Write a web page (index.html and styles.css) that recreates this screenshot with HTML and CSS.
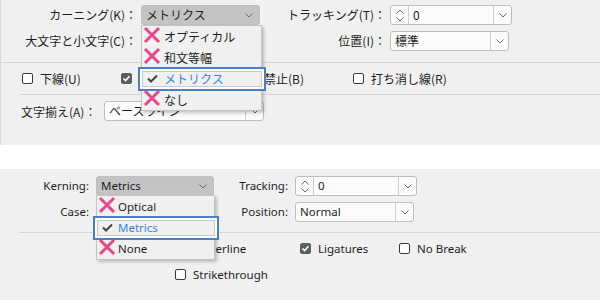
FILE: index.html
```html
<!DOCTYPE html>
<html lang="ja">
<head>
  <meta charset="UTF-8">
  <title>カーニング</title>
  <link rel="stylesheet" href="styles.css">
</head>
<body>

  <div class="panel ja">
    <div class="form form-ja">
      <label class="lbl">カーニング(K)：</label>
      <div class="field open w119">
        <span class="val">メトリクス</span>
        <span class="btn"><svg class="chev" viewBox="0 0 8 5"><polyline points="0.5,0.5 4,4 7.5,0.5"/></svg></span>
      </div>
      <label class="lbl">トラッキング(T)：</label>
      <div class="field spin w122">
        <span class="arrows">
          <svg class="chev" viewBox="0 0 8 5"><polyline points="0.5,4.5 4,1 7.5,4.5"/></svg>
          <svg class="chev" viewBox="0 0 8 5"><polyline points="0.5,0.5 4,4 7.5,0.5"/></svg>
        </span>
        <span class="val">0</span>
        <span class="btn"><svg class="chev" viewBox="0 0 8 5"><polyline points="0.5,0.5 4,4 7.5,0.5"/></svg></span>
      </div>

      <label class="lbl">大文字と小文字(C)：</label>
      <div class="field w119">
        <span class="val">標準</span>
        <span class="btn"><svg class="chev" viewBox="0 0 8 5"><polyline points="0.5,0.5 4,4 7.5,0.5"/></svg></span>
      </div>
      <label class="lbl">位置(I)：</label>
      <div class="field w119">
        <span class="val">標準</span>
        <span class="btn"><svg class="chev" viewBox="0 0 8 5"><polyline points="0.5,0.5 4,4 7.5,0.5"/></svg></span>
      </div>
    </div>

    <div class="rule"></div>

    <div class="checks checks-ja">
      <div class="check c99"><span class="box"></span>下線(U)</div>
      <div class="check c101"><span class="box on"><svg viewBox="0 0 11 11"><polyline points="2.5,5.5 4.6,7.6 8.5,3.2"/></svg></span>合字(L)</div>
      <div class="check c131"><span class="box"></span>分離禁止(B)</div>
      <div class="check"><span class="box"></span>打ち消し線(R)</div>
    </div>

    <div class="rule ind"></div>

    <div class="align-row">
      <label class="lbl-left">文字揃え(A)：</label>
      <div class="field w160">
        <span class="val">ベースライン</span>
        <span class="btn"><svg class="chev" viewBox="0 0 8 5"><polyline points="0.5,0.5 4,4 7.5,0.5"/></svg></span>
      </div>
    </div>

    <ul class="menu menu-ja">
      <li><svg class="x" viewBox="0 0 18 18"><path d="M2 2L16 16M16 2L2 16"/></svg>オプティカル</li>
      <li><svg class="x" viewBox="0 0 18 18"><path d="M2 2L16 16M16 2L2 16"/></svg>和文等幅</li>
      <li class="sel"><svg class="tick" viewBox="0 0 11 9"><polyline points="1,4.5 4,7.5 10,1.5"/></svg>メトリクス</li>
      <li><svg class="x" viewBox="0 0 18 18"><path d="M2 2L16 16M16 2L2 16"/></svg>なし</li>
    </ul>
  </div>

  <div class="gap"></div>

  <div class="panel en">
    <div class="form form-en">
      <label class="lbl">Kerning:</label>
      <div class="field open w118">
        <span class="val">Metrics</span>
        <span class="btn"><svg class="chev" viewBox="0 0 8 5"><polyline points="0.5,0.5 4,4 7.5,0.5"/></svg></span>
      </div>
      <label class="lbl">Tracking:</label>
      <div class="field spin w122">
        <span class="arrows">
          <svg class="chev" viewBox="0 0 8 5"><polyline points="0.5,4.5 4,1 7.5,4.5"/></svg>
          <svg class="chev" viewBox="0 0 8 5"><polyline points="0.5,0.5 4,4 7.5,0.5"/></svg>
        </span>
        <span class="val">0</span>
        <span class="btn"><svg class="chev" viewBox="0 0 8 5"><polyline points="0.5,0.5 4,4 7.5,0.5"/></svg></span>
      </div>

      <label class="lbl">Case:</label>
      <div class="field w118">
        <span class="val">Normal</span>
        <span class="btn"><svg class="chev" viewBox="0 0 8 5"><polyline points="0.5,0.5 4,4 7.5,0.5"/></svg></span>
      </div>
      <label class="lbl">Position:</label>
      <div class="field w119">
        <span class="val">Normal</span>
        <span class="btn"><svg class="chev" viewBox="0 0 8 5"><polyline points="0.5,0.5 4,4 7.5,0.5"/></svg></span>
      </div>
    </div>

    <div class="rule ind-en"></div>

    <div class="checks-en">
      <div class="checks-line">
        <div class="check c125"><span class="box"></span>Underline</div>
        <div class="check c99"><span class="box on"><svg viewBox="0 0 11 11"><polyline points="2.5,5.5 4.6,7.6 8.5,3.2"/></svg></span>Ligatures</div>
        <div class="check"><span class="box"></span>No Break</div>
      </div>
      <div class="checks-line">
        <div class="check"><span class="box"></span>Strikethrough</div>
      </div>
    </div>

    <ul class="menu menu-en">
      <li><svg class="x" viewBox="0 0 18 18"><path d="M2 2L16 16M16 2L2 16"/></svg>Optical</li>
      <li class="sel"><svg class="tick" viewBox="0 0 11 9"><polyline points="1,4.5 4,7.5 10,1.5"/></svg>Metrics</li>
      <li><svg class="x" viewBox="0 0 18 18"><path d="M2 2L16 16M16 2L2 16"/></svg>None</li>
    </ul>
  </div>

</body>
</html>
```

FILE: styles.css
```css
/* Base */
body {
  margin: 0;
  width: 600px;
  height: 300px;
  overflow: hidden;
  background-color: #ffffff;
  color: #1e1e1e;
  font-size: 12px;
}

.panel {
  position: relative;
  background-color: #f0f0f0;
}

.ja {
  height: 145px;
  font-family: "Noto Sans CJK JP", sans-serif;
  box-shadow: inset 1px 0 0 #d6d6d6;
}

.en {
  height: 131px;
  font-family: "Noto Sans", "Noto Sans CJK JP", sans-serif;
  font-size: 11.5px;
}

.gap {
  height: 24px;
}

/* Form grid */
.form {
  display: grid;
  grid-auto-rows: 20px;
  row-gap: 6px;
  align-items: center;
}

.form-ja {
  grid-template-columns: 141px 119px 130px 122px;
  padding-top: 5px;
}

.form-en {
  grid-template-columns: 96px 118px 81px 122px;
  padding-top: 7px;
}

.lbl {
  text-align: right;
  white-space: nowrap;
  line-height: 20px;
}

.form-ja .lbl {
  padding-right: 4px;
}

.form-en .lbl {
  padding-right: 7px;
}

/* Fields */
.field {
  display: flex;
  height: 20px;
  box-sizing: border-box;
  border: 1px solid #bdbdbd;
  border-radius: 3px;
  background-color: #fbfbfb;
  line-height: 18px;
}

.w118 { width: 118px; }
.w119 { width: 119px; }
.w122 { width: 122px; }
.w160 { width: 160px; }

.field .val {
  flex: 1;
  padding-left: 4px;
  white-space: nowrap;
  overflow: hidden;
}

.field .btn {
  width: 17px;
  border-left: 1px solid #cfcfcf;
  display: flex;
  align-items: center;
  justify-content: center;
}

.field.open {
  background-color: #c3c3c3;
  border-color: #c0c0c0;
}

.field.open .btn {
  border-left: none;
  width: 20px;
}

.spin .arrows {
  width: 17px;
  border-right: 1px solid #cfcfcf;
  display: flex;
  flex-direction: column;
  align-items: center;
  justify-content: center;
  gap: 3px;
}

.chev {
  width: 8px;
  height: 5px;
  fill: none;
  stroke: #666;
  stroke-width: 1;
}

/* Rules */
.rule {
  height: 1px;
  background-color: #d6d6d6;
}

.ja .rule {
  margin-top: 11px;
}

.ja .rule.ind {
  margin-top: 0;
  margin-left: 20px;
}

.rule.ind-en {
  margin-top: 10px;
  margin-left: 19px;
}

/* Checkboxes */
.checks-ja {
  display: flex;
  align-items: center;
  height: 31px;
  padding-left: 22px;
}

.checks-en {
  padding-left: 175px;
  padding-top: 7px;
  display: flex;
  flex-direction: column;
  gap: 10px;
}

.checks-line {
  display: flex;
  align-items: center;
  height: 16px;
}

.check {
  display: flex;
  align-items: center;
  gap: 7px;
  white-space: nowrap;
}

.c99 { width: 99px; }
.c101 { width: 101px; }
.c125 { width: 125px; }
.c131 { width: 131px; }

.box {
  width: 11px;
  height: 11px;
  box-sizing: border-box;
  border: 1px solid #3a3a3a;
  border-radius: 2px;
  background-color: #ffffff;
  flex-shrink: 0;
}

.box.on {
  background-color: #5e5e5e;
  border-color: #5e5e5e;
}

.box svg {
  display: block;
  width: 11px;
  height: 11px;
  margin: -1px;
  fill: none;
  stroke: #ffffff;
  stroke-width: 1.6;
}

.align-row {
  display: flex;
  align-items: center;
  height: 20px;
  margin-top: 6px;
  padding-left: 21px;
}

.lbl-left {
  width: 83px;
  white-space: nowrap;
}

/* Dropdown menus */
.menu {
  position: absolute;
  margin: 0;
  padding: 0;
  list-style: none;
  box-sizing: border-box;
  background-color: #f0f0f0;
  border: 1px solid #c4c4c4;
  box-shadow: 2px 2px 3px rgba(0, 0, 0, 0.22);
}

.menu-ja {
  left: 141px;
  top: 25px;
  width: 121px;
}

.menu-en {
  left: 96px;
  top: 26px;
  width: 119px;
}

.menu li {
  position: relative;
  height: 21px;
  line-height: 21px;
  padding-left: 22px;
  white-space: nowrap;
}

.menu-en li {
  padding-left: 21px;
}

.menu .x {
  position: absolute;
  left: 1px;
  top: 0;
  width: 18px;
  height: 18px;
  fill: none;
  stroke: #e6468a;
  stroke-width: 3;
}

.menu .tick {
  position: absolute;
  left: 5px;
  top: 6px;
  width: 11px;
  height: 9px;
  fill: none;
  stroke: #444;
  stroke-width: 2;
}

.menu li.sel {
  color: #3a82e4;
}

.menu li.sel::before {
  content: "";
  position: absolute;
  left: -4px;
  right: -5px;
  top: -1px;
  bottom: -2px;
  border: 2px solid #4b7ec2;
  box-shadow: inset 0 0 0 2px #ffffff, inset 0 0 0 3px #c8c8c8;
}
```
